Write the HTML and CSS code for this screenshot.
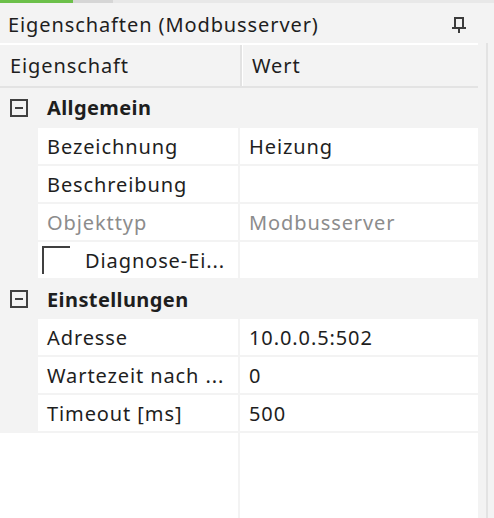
FILE: index.html
```html
<!DOCTYPE html>
<html lang="de">
<head>
    <meta charset="UTF-8">
    <link rel="stylesheet" href="styles.css">
    <title>Eigenschaften</title>
</head>
<body>
    <div class="progress">
        <div class="progress-done"></div>
        <div class="progress-rest"></div>
    </div>
    <div class="titlebar">
        <span class="title">Eigenschaften (Modbusserver)</span>
        <svg class="pin" width="14" height="16" viewBox="0 0 14 16">
            <rect x="3" y="1" width="8" height="10" fill="none" stroke="#3c3c3c" stroke-width="2"/>
            <rect x="0" y="10" width="14" height="2" fill="#3c3c3c"/>
            <rect x="6" y="12" width="2" height="4" fill="#3c3c3c"/>
        </svg>
    </div>
    <div class="panel">
        <div class="grid">
            <div class="grid-header">
                <div class="head-cell head-name">Eigenschaft</div>
                <div class="head-cell head-value">Wert</div>
            </div>

            <div class="category first">
                <span class="toggle"></span>
                <span class="category-label">Allgemein</span>
            </div>
            <div class="row">
                <div class="cell name">Bezeichnung</div>
                <div class="cell value">Heizung</div>
            </div>
            <div class="row">
                <div class="cell name">Beschreibung</div>
                <div class="cell value"></div>
            </div>
            <div class="row disabled">
                <div class="cell name">Objekttyp</div>
                <div class="cell value">Modbusserver</div>
            </div>
            <div class="row">
                <div class="cell name check-cell">
                    <span class="checkbox"></span>
                    <span class="check-label">Diagnose-Ei...</span>
                </div>
                <div class="cell value"></div>
            </div>

            <div class="category">
                <span class="toggle"></span>
                <span class="category-label">Einstellungen</span>
            </div>
            <div class="row">
                <div class="cell name">Adresse</div>
                <div class="cell value">10.0.0.5:502</div>
            </div>
            <div class="row">
                <div class="cell name">Wartezeit nach ...</div>
                <div class="cell value">0</div>
            </div>
            <div class="row">
                <div class="cell name">Timeout [ms]</div>
                <div class="cell value">500</div>
            </div>

            <div class="empty">
                <div class="empty-name"></div>
                <div class="empty-value"></div>
            </div>
        </div>
        <div class="scrollbar"></div>
    </div>
</body>
</html>
```

FILE: styles.css
```css
body {
    margin: 0;
    background-color: #f3f3f3;
    font-family: 'Noto Sans', 'Open Sans', sans-serif;
    font-size: 20px;
    letter-spacing: 0.9px;
    color: #1e1e1e;
    height: 518px;
    overflow: hidden;
}

.progress {
    display: flex;
    height: 3px;
    background-color: #e8e8e8;
}

.progress-done {
    width: 73px;
    background-color: #6cc04a;
}

.progress-rest {
    width: 40px;
    background-color: #d6d6d6;
}

.titlebar {
    height: 37px;
    display: flex;
    align-items: center;
    justify-content: space-between;
    padding: 3px 28px 0 8px;
}

.pin {
    display: block;
}

.panel {
    display: flex;
    height: 475px;
}

.grid {
    width: 478px;
    display: flex;
    flex-direction: column;
}

.grid-header {
    display: flex;
    height: 41px;
    border-top: 2px solid #fff;
    border-bottom: 2px solid #e3e3e3;
}

.head-cell {
    display: flex;
    align-items: center;
}

.head-name {
    width: 230px;
    padding-left: 10px;
    border-right: 2px solid #e3e3e3;
}

.head-value {
    flex: 1;
    padding-left: 9px;
    border-left: 1px solid #fff;
}

.category {
    height: 38px;
    display: flex;
    align-items: center;
    margin-bottom: 1px;
}

.category.first {
    height: 39px;
}

.toggle {
    width: 14px;
    height: 14px;
    border: 2px solid #404040;
    margin-left: 10px;
    position: relative;
}

.toggle::after {
    content: '';
    position: absolute;
    left: 3px;
    top: 6px;
    width: 8px;
    height: 2px;
    background-color: #404040;
}

.category-label {
    font-weight: bold;
    margin-left: 19px;
    letter-spacing: 0.4px;
}

.row {
    display: flex;
    height: 36px;
    margin-bottom: 2px;
    padding-left: 38px;
}

.cell {
    box-sizing: border-box;
    background-color: #fff;
    display: flex;
    align-items: center;
    padding-left: 9px;
    white-space: nowrap;
    overflow: hidden;
}

.name {
    width: 200px;
}

.value {
    flex: 1;
    margin-left: 2px;
    padding-left: 9px;
}

.disabled .cell {
    color: #8c8c8c;
}

.check-cell {
    padding-left: 4px;
}

.checkbox {
    flex-shrink: 0;
    width: 26px;
    height: 26px;
    border-top: 2px solid #404040;
    border-left: 2px solid #404040;
    align-self: flex-start;
    margin-top: 4px;
}

.check-label {
    margin-left: 15px;
}

.empty {
    flex: 1;
    display: flex;
}

.empty-name {
    width: 238px;
    background-color: #fff;
}

.empty-value {
    flex: 1;
    margin-left: 2px;
    background-color: #fff;
}

.scrollbar {
    width: 6px;
    margin-left: 8px;
    border-left: 2px solid #e3e3e3;
}
```
